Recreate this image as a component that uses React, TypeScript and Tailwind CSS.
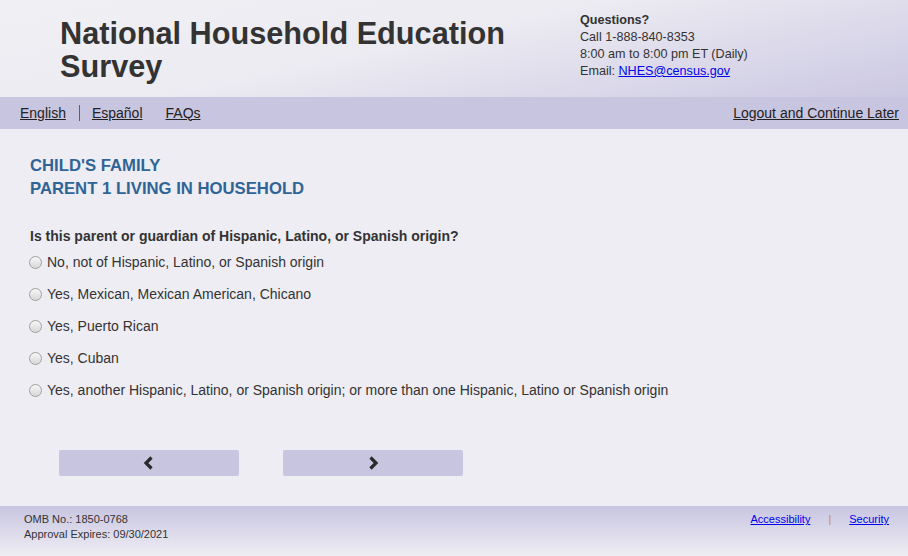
const options = [
  "No, not of Hispanic, Latino, or Spanish origin",
  "Yes, Mexican, Mexican American, Chicano",
  "Yes, Puerto Rican",
  "Yes, Cuban",
  "Yes, another Hispanic, Latino, or Spanish origin; or more than one Hispanic, Latino or Spanish origin",
];

const Chevron = ({ dir }: { dir: "left" | "right" }) => (
  <svg width="12" height="14" viewBox="0 0 12 14" className="text-[#2a2a2a]">
    <path
      d={dir === "left" ? "M8.5 1.5 L3 7 L8.5 12.5" : "M3.5 1.5 L9 7 L3.5 12.5"}
      fill="none"
      stroke="currentColor"
      strokeWidth="3.2"
      strokeLinejoin="miter"
    />
  </svg>
);

const App = () => {
  return (
    <div className="w-[908px] h-[556px] flex flex-col bg-[#eeedf3] text-[#333] font-['Liberation_Sans',Arial,sans-serif] overflow-hidden">
      {/* header */}
      <header className="h-[97px] flex bg-[linear-gradient(168deg,#f0f0f4_0%,#ecebf2_45%,#cbc8e2_100%)]">
        <h1 className="pl-[60px] pt-[17px] w-[580px] text-[30.7px] leading-[33px] font-bold text-[#333]">
          National Household Education Survey
        </h1>
        <div className="pt-[12px] text-[12.6px] leading-[17px]">
          <div className="font-bold">Questions?</div>
          <div>Call 1-888-840-8353</div>
          <div>8:00 am to 8:00 pm ET (Daily)</div>
          <div>
            Email: <a href="#" className="text-[#0000ee] underline">NHES@census.gov</a>
          </div>
        </div>
      </header>

      {/* nav */}
      <nav className="h-[32px] bg-[#c8c5e1] flex items-center justify-between pl-[20px] pr-[9px] text-[14px] text-[#222]">
        <div className="flex items-center">
          <a href="#" className="underline">English</a>
          <span className="ml-[13px] mr-[12px] w-px h-[16px] bg-[#7a5a3a]" />
          <a href="#" className="underline">Español</a>
          <a href="#" className="underline ml-[23px]">FAQs</a>
        </div>
        <a href="#" className="underline">Logout and Continue Later</a>
      </nav>

      {/* main */}
      <main className="flex-1 pl-[30px] pt-[25px]">
        <h2 className="text-[16.7px] leading-[23px] font-bold text-[#2f6496]">
          CHILD'S FAMILY
          <br />
          PARENT 1 LIVING IN HOUSEHOLD
        </h2>
        <p className="mt-[28px] text-[14px] leading-[17px] font-bold">
          Is this parent or guardian of Hispanic, Latino, or Spanish origin?
        </p>
        <div className="mt-[1px] flex flex-col">
          {options.map((o) => (
            <label key={o} className="h-[32px] flex items-center text-[14px] text-[#333]">
              <span className="w-[13px] h-[13px] -ml-[1px] rounded-full border border-[#a0a0a0] bg-[linear-gradient(#f6f6f6,#d8d8d8)]" />
              <span className="ml-[5px]">{o}</span>
            </label>
          ))}
        </div>
        <div className="mt-[44px] ml-[29px] flex gap-[44px]">
          <button className="w-[180px] h-[26px] rounded-[2px] bg-[#c8c5e1] flex items-center justify-center">
            <Chevron dir="left" />
          </button>
          <button className="w-[180px] h-[26px] rounded-[2px] bg-[#c8c5e1] flex items-center justify-center">
            <Chevron dir="right" />
          </button>
        </div>
      </main>

      {/* footer */}
      <footer className="h-[50px] bg-[linear-gradient(#c8c5e1,#eeedf3)] flex justify-between pl-[24px] pr-[19px] pt-[6px] text-[11px] leading-[15px]">
        <div>
          <div>OMB No.: 1850-0768</div>
          <div>Approval Expires: 09/30/2021</div>
        </div>
        <div className="flex">
          <a href="#" className="text-[#0000ee] underline">Accessibility</a>
          <span className="mx-[18px] text-[#c8902a]">|</span>
          <a href="#" className="text-[#0000ee] underline">Security</a>
        </div>
      </footer>
    </div>
  );
};

export default App;
